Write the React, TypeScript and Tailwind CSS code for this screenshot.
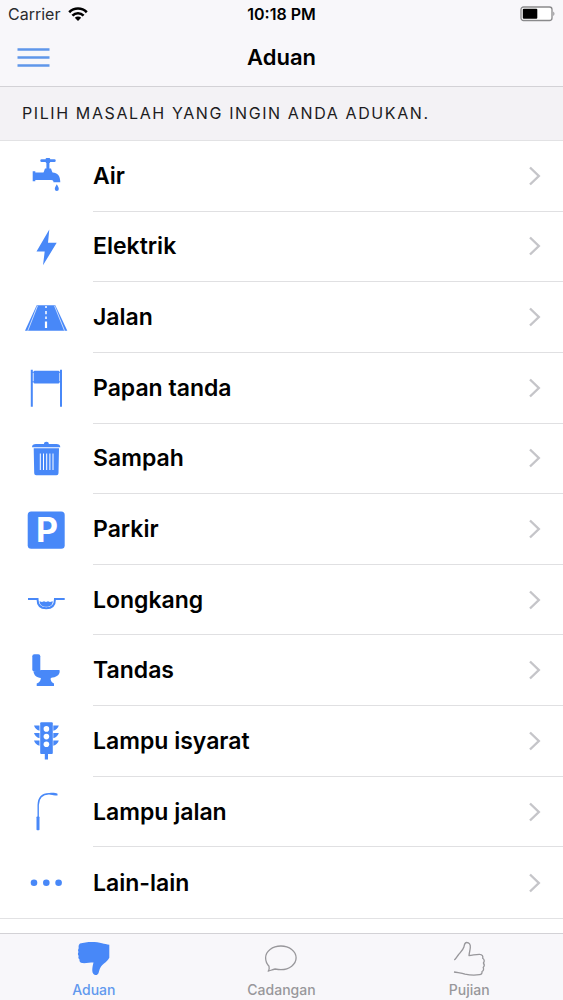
import React from 'react'

const icons: Record<string, React.ReactNode> = {
  Air: (
    <>
      <rect x="16.3" y="5.2" width="15.4" height="2.8" rx="1.2" />
      <rect x="21.6" y="4" width="4.6" height="5" rx="1" />
      <rect x="22.4" y="7" width="3" height="10" />
      <path d="M21 14.5h6l1.6 4.5h-9.2z" />
      <path d="M8.7 17.3h2.6v1.2h17.2c5 0 7.8 3.4 7.8 9.7h-6.8c0-1.500-.8-2.200-2.400-2.200H11.300v1.300H8.700z" />
      <path d="M32.800 30.300c1 2 2 3.200 2 4.600a2 2 0 0 1-4 0c0-1.400 1-2.600 2-4.600z" />
    </>
  ),
  Elektrik: <path d="M25.300 4.500 12.500 26.500h8.200L19 40.300l13.700-22.500h-8.700z" />,
  Jalan: (
    <>
      <path d="M12.700 9.300h18.600L43.300 34.700H1z" />
      <path d="M13.500 9.800 3.800 34.700M30.500 9.800l10 24.900" stroke="#fff" strokeWidth=".7" />
      <path d="M22 10v2M22 15v3.200M22 20.500v2.500" stroke="#fff" strokeWidth="1.500" />
      <path d="M22 25.500v6.500" stroke="#fff" strokeWidth="2.200" />
    </>
  ),
  'Papan tanda': (
    <>
      <path d="M6.800 3.700h2v37h-2zM36 3.700h2v37h-2z" />
      <rect x="9.600" y="4.800" width="25.800" height="12.600" rx="1" />
      <path d="M8 6.300h29M8 15.800h29" stroke="currentColor" strokeWidth="1" />
    </>
  ),
  Sampah: (
    <>
      <path d="M8 10.300c0-2.300 1.500-3.300 4-3.300h8c0-1.500.8-2.200 2.400-2.200s2.400.7 2.400 2.200h7.500c2.500 0 4 1 4 3.300z" />
      <path d="M9.700 11.300h25.300l-.5 25a2 2 0 0 1-2 1.900H12.200a2 2 0 0 1-2-1.900z" />
      <path d="M16.300 16.500v16.500M19.500 16.500v16.500M22.700 16.500v16.500M25.900 16.500v16.500M29 16.500v16.500" stroke="#fff" strokeWidth="1" />
    </>
  ),
  Parkir: (
    <>
      <rect x="3.700" y="3.500" width="37" height="37.300" rx="3.500" />
      <text x="23" y="34" fill="#fff" fontSize="34" fontWeight="700" textAnchor="middle">P</text>
    </>
  ),
  Longkang: (
    <>
      <path d="M4 21h9.500c0 6 2.500 9.300 8.700 9.300s8.800-3.300 8.800-9.300h9.700" fill="none" stroke="currentColor" strokeWidth="2" />
      <path d="M15.500 23.300l2.500.8 2-.8 2 .8 2-.8 2 .8 2.800-.8c-.4 4-2.500 5.500-6.500 5.500s-6.400-1.500-6.800-5.500z" />
    </>
  ),
  Tandas: (
    <>
      <rect x="8.300" y="5.300" width="8" height="17.200" rx="2" />
      <path d="M9.500 22.500l7.500-1.500h18.500c.9 3.800-1.700 6.800-6.800 7.500-2 .3-2.400 1-1.900 2.500.4 1.500 1.200 2.700 3.200 3.500V37H12.700v-2.500c2.500-.9 4-2.500 4.200-5.500-4.600-.6-6.800-2.500-7.400-6.500z" />
    </>
  ),
  'Lampu isyarat': (
    <>
      <rect x="16.200" y="3.300" width="12.600" height="31.700" rx="1" />
      <path d="M20.800 34.500h3.200v6h-3.200z" />
      <path d="M10 6.500h5.500v5.300c-2.800-.8-4.800-2.600-5.500-5.300zM10 14h5.500v5.300c-2.800-.8-4.800-2.600-5.500-5.300zM10 21.500h5.500v5.300c-2.800-.8-4.800-2.600-5.500-5.300z" />
      <path d="M34.800 6.500h-5.500v5.300c2.800-.8 4.800-2.600 5.500-5.300zM34.800 14h-5.500v5.300c2.800-.8 4.800-2.600 5.500-5.300zM34.800 21.500h-5.500v5.300c2.800-.8 4.800-2.600 5.500-5.300z" />
      <g fill="#fff">
        <circle cx="22.400" cy="9.900" r="2.800" />
        <circle cx="22.400" cy="17.600" r="2.800" />
        <circle cx="22.400" cy="25.300" r="2.800" />
      </g>
    </>
  ),
  'Lampu jalan': (
    <>
      <rect x="12.500" y="26.500" width="3" height="13.700" rx=".8" />
      <path d="M14.200 28V15C14.500 7.500 18 3.800 25 3.800h4" fill="none" stroke="currentColor" strokeWidth="1.400" />
      <path d="M25.500 3c3-.5 6-.2 8 .8v1.800c-3-.2-5.500-.6-8-1.400z" />
    </>
  ),
  'Lain-lain': (
    <>
      <circle cx="10" cy="21.700" r="3.300" />
      <circle cx="22.300" cy="21.700" r="3.300" />
      <circle cx="34.600" cy="21.700" r="3.300" />
    </>
  ),
}

const items = Object.keys(icons)

const tabs = [
  {
    label: 'Aduan',
    active: true,
    icon: (
      <path
        className="text-[#4888f8]"
        fill="currentColor"
        d="M4 2.500C10 .6 20 .4 26 2.200c2.500.8 5 1 7.300 1.500v13c-1 2.200-3 4-5.300 5.800-2.500 2-3.800 4-4.600 6.500-.7 2.400-1 5-3.400 5-2.800 0-4-2.600-3.700-6 .2-2.600.7-4.600 1.200-6.500-3.500 0-7 .8-11 .6-2.300-.2-3.300-1.400-3-3.600C2.400 17.800 2 16.500 2.700 15c-1-1.200-1-2.600-.2-4-.7-1.200-.6-2.600.2-3.800C2.400 5.300 2.600 3.700 4 2.500z"
      />
    ),
  },
  {
    label: 'Cadangan',
    active: false,
    icon: (
      <path d="M5.200 30.200c1-1.800 1.300-3.500.8-5C3.800 23 2.600 20 2.600 16.800 2.600 10.300 9.400 5 17.900 5s15.200 5.300 15.200 11.800-6.700 11.800-15.200 11.800c-2 0-4-.3-5.800-.6-2.300.4-4.500 1.500-6.900 2.200z" />
    ),
  },
  {
    label: 'Pujian',
    active: false,
    icon: (
      <path d="M3.300 19c2-1.500 2.600-3.500 4.400-5.500 2-2.300 4.300-4.500 5.200-7.500.6-2 .4-4.500 2.700-4.500 2.700 0 4 2 3.700 5-.2 2.700-1 5-1.300 8 3.600-.2 7-1.300 10.500-1.200 3 .1 3.700 2 3.200 4 1.800 1.200 2 3.200.7 4.700 1.200 1.500 1 3.300-.2 4.500.8 1.600.3 3.300-1.200 4 .3 2-.6 3-2.500 3.200-5 .7-10 .4-14.500-.6C10.500 32 7 31.800 3 31" />
    ),
  },
]

const Header: React.FC = () => {
  return (
    <header className="border-b border-[#d3d2d6] bg-[#f8f7fa]">
      <div className="grid grid-cols-3 items-center h-7 px-2 text-base leading-7">
        <div className="flex items-center gap-2">
          <span className="text-[#2b2b2d]">Carrier</span>
          <svg width="20" height="15" viewBox="0 0 20 15" fill="none" stroke="#000" strokeWidth="2.600">
            <path d="M1.200 5.200c5-4.900 12.600-4.900 17.600 0M4.400 8.600c3.200-3.200 8-3.200 11.200 0" />
            <path d="M10 14 6.800 10.800c1.900-1.700 4.500-1.700 6.400 0z" fill="#000" stroke="none" />
          </svg>
        </div>
        <span className="text-center font-semibold">10:18 PM</span>
        <svg className="justify-self-end" width="35" height="16" viewBox="0 0 35 16">
          <rect x="1" y="1" width="31" height="13.500" rx="2.500" fill="#fff" stroke="#8a8a8c" strokeWidth="1.300" />
          <rect x="2.800" y="2.800" width="14.500" height="10" rx="1" fill="#000" />
          <path d="M33.300 5.500c1.500.7 1.500 3.800 0 4.500z" fill="#8a8a8c" />
        </svg>
      </div>
      <div className="grid grid-cols-3 items-center h-[58px] px-4">
        <button aria-label="Menu" className="justify-self-start">
          <svg width="34" height="24" viewBox="0 0 34 24" stroke="#5f97ea" strokeWidth="2.600">
            <path d="M1.500 4.500h32M1.500 12.500h32M1.500 20.500h32" />
          </svg>
        </button>
        <h1 className="text-center text-[22px] leading-7 font-semibold">Aduan</h1>
      </div>
    </header>
  )
}

const Row: React.FC<{ label: string; last: boolean }> = ({ label, last }) => {
  return (
    <li className={`flex flex-1 min-h-16 ${last ? 'border-b border-[#e2e2e4]' : ''}`}>
      <button className="flex flex-1 items-stretch pl-6 text-left">
        <svg className="self-center shrink-0 text-[#4888f8]" width="44" height="44" viewBox="0 0 44 44" fill="currentColor">
          {icons[label]}
        </svg>
        <span className={`flex flex-1 items-center justify-between ml-[25px] pr-[22px] ${last ? '' : 'border-b border-[#e0e0e2]'}`}>
          <span className="text-[23px] leading-7 font-semibold">{label}</span>
          <svg width="13" height="20" viewBox="0 0 13 20" fill="none" stroke="#c5c5c9" strokeWidth="2.400">
            <path d="M2 1.500 10.800 10 2 18.500" />
          </svg>
        </span>
      </button>
    </li>
  )
}

const TabBar: React.FC = () => {
  return (
    <nav className="grid grid-cols-3 border-t border-[#d3d2d6] bg-[#f8f7fa]">
      {tabs.map((tab) => (
        <button key={tab.label} className={`flex flex-col items-center pt-[7px] ${tab.active ? 'text-[#6199ee]' : 'text-[#98979b]'}`}>
          <svg width="36" height="36" viewBox="0 0 36 36" fill="none" stroke={tab.active ? 'none' : 'currentColor'} strokeWidth="1.300" strokeLinejoin="round">
            {tab.icon}
          </svg>
          <span className="pt-[5px] pb-0.5 text-sm leading-4 font-medium">{tab.label}</span>
        </button>
      ))}
    </nav>
  )
}

const App: React.FC = () => {
  return (
    <div className="flex flex-col min-h-screen bg-white text-black font-['Inter',sans-serif]">
      <Header />
      <main className="flex flex-1 flex-col">
        <h2 className="border-b border-[#e2e2e4] bg-[#f3f2f5] px-[22px] py-[14px] text-base leading-[25px] tracking-widest text-[#1c1c1e]">
          PILIH MASALAH YANG INGIN ANDA ADUKAN.
        </h2>
        <ul className="flex flex-1 flex-col pb-[14px]">
          {items.map((label, i) => (
            <Row key={label} label={label} last={i === items.length - 1} />
          ))}
        </ul>
      </main>
      <TabBar />
    </div>
  )
}

export default App
